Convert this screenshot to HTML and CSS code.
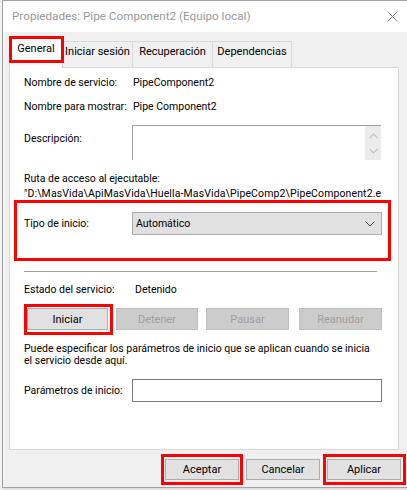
FILE: index.html
```html
<!DOCTYPE html>
<html lang="es">
<head>
<meta charset="utf-8">
<link rel="stylesheet" href="styles.css">
</head>
<body>
<div class="window">
  <div class="titlebar">
    <span class="title">Propiedades: Pipe Component2 (Equipo local)</span>
    <svg class="close" width="11" height="11" viewBox="0 0 11 11"><path d="M0.5 0.5 L10.5 10.5 M10.5 0.5 L0.5 10.5" stroke="#8a8a8a" stroke-width="1" fill="none"/></svg>
  </div>
  <div class="client">
    <div class="tabs">
      <div class="tab sel">General<span class="hl hl-tab"></span></div>
      <div class="tab t2">Iniciar sesión</div>
      <div class="tab t3">Recuperación</div>
      <div class="tab t4">Dependencias</div>
    </div>
    <div class="panel">
      <div class="row r1"><span class="lbl">Nombre de servicio:</span><span class="val">PipeComponent2</span></div>
      <div class="row r2"><span class="lbl">Nombre para mostrar:</span><span class="val">Pipe Component2</span></div>
      <div class="row desc">
        <span class="lbl lbl-desc">Descripción:</span>
        <div class="descbox">
          <div class="scroll">
            <svg width="9" height="6" viewBox="0 0 9 6"><path d="M0.5 5 L4.5 1 L8.5 5" stroke="#c3c3c3" stroke-width="1.2" fill="none"/></svg>
            <svg width="9" height="6" viewBox="0 0 9 6"><path d="M0.5 1 L4.5 5 L8.5 1" stroke="#c3c3c3" stroke-width="1.2" fill="none"/></svg>
          </div>
        </div>
      </div>
      <div class="line ruta">Ruta de acceso al ejecutable:</div>
      <div class="line path">"D:\MasVida\ApiMasVida\Huella-MasVida\PipeComp2\PipeComponent2.exe"</div>
      <div class="row tipo">
        <span class="lbl">Tipo de inicio:</span>
        <div class="select">
          <span>Automático</span>
          <svg width="10" height="6" viewBox="0 0 10 6"><path d="M0.5 0.5 L5 5 L9.5 0.5" stroke="#4a4a4a" stroke-width="1" fill="none"/></svg>
        </div>
        <span class="hl hl-tipo"></span>
      </div>
      <div class="sep"></div>
      <div class="row estado"><span class="lbl">Estado del servicio:</span><span class="val val-estado">Detenido</span></div>
      <div class="btnrow">
        <div class="btn b-ini">Iniciar<span class="hl hl-ini"></span></div>
        <div class="btn dis b-det">Detener</div>
        <div class="btn dis b-pau">Pausar</div>
        <div class="btn dis b-rea">Reanudar</div>
      </div>
      <p class="note">Puede especificar los parámetros de inicio que se aplican cuando se inicia<br>el servicio desde aquí.</p>
      <div class="row params">
        <span class="lbl">Parámetros de inicio:</span>
        <div class="input"></div>
      </div>
    </div>
    <div class="footer">
      <div class="btn fbtn">Aceptar<span class="hl hl-foot"></span></div>
      <div class="btn fbtn">Cancelar</div>
      <div class="btn fbtn">Aplicar<span class="hl hl-foot2"></span></div>
    </div>
  </div>
</div>
</body>
</html>
```
FILE: styles.css
```css
html, body {
  margin: 0;
  padding: 0;
  overflow: hidden;
  background: #f3f3f3;
}
body {
  width: 407px;
  height: 490px;
  font-family: Roboto, "Liberation Sans", Arial, sans-serif;
  font-size: 10.5px;
  line-height: 13px;
  color: #000;
}
.window {
  margin-left: 2px;
  width: 420px;
  border-top: 1px solid #a3a3a3;
  border-left: 1px solid #a3a3a3;
  border-bottom: 1px solid #a3a3a3;
  box-shadow: 1px 1px 2px rgba(0,0,0,0.15);
}
.titlebar {
  height: 31px;
  background: #fff;
  display: flex;
  align-items: center;
  padding-left: 9px;
  position: relative;
}
.title {
  color: #999;
  font-size: 11.7px;
  margin-top: -1px;
}
.close {
  position: absolute;
  left: 384px;
  top: 10px;
}
.client {
  height: 455px;
  box-sizing: border-box;
  background: #f0f0f0;
  padding: 4px 0 0 6px;
}
.tabs {
  display: flex;
  align-items: flex-end;
  height: 32px;
  margin-bottom: -1px;
  position: relative;
  z-index: 1;
}
.tab {
  box-sizing: border-box;
  height: 26px;
  margin-bottom: 1px;
  padding-top: 3px;
  text-align: center;
  border-top: 1px solid #d9d9d9;
  border-right: 1px solid #d9d9d9;
  background: #f0f0f0;
  white-space: nowrap;
  font-size: 11px;
}
.tab.sel {
  position: relative;
  width: 54px;
  height: 32px;
  margin-bottom: 0;
  padding-top: 5px;
  background: #fff;
  border-left: 1px solid #d9d9d9;
}
.t2 { width: 70px; }
.t3 { width: 80px; }
.t4 { width: 79px; }
.hl {
  position: absolute;
  border: 3px solid #f00;
  box-sizing: border-box;
  pointer-events: none;
}
.hl-tab { left: -1px; top: -1px; width: 55px; height: 27px; }
.panel {
  box-sizing: border-box;
  width: 390px;
  height: 383px;
  background: #fff;
  border: 1px solid #d9d9d9;
  padding: 8px 0 0 14px;
}
.row {
  display: flex;
  align-items: center;
}
.lbl {
  width: 108px;
  flex: none;
  white-space: nowrap;
}
.val { padding-left: 1px; white-space: nowrap; }
.r2 { margin-top: 11px; }
.desc {
  margin-top: 12px;
  align-items: flex-start;
  height: 35px;
}
.lbl-desc { padding-top: 7px; }
.descbox {
  box-sizing: border-box;
  width: 249px;
  height: 35px;
  border-top: 1px solid #a0a0a0;
  border-left: 1px solid #a0a0a0;
  display: flex;
  justify-content: flex-end;
}
.scroll {
  width: 16px;
  height: 34px;
  background: #ececec;
  display: flex;
  flex-direction: column;
  align-items: center;
  justify-content: space-between;
  padding: 7px 0 6px;
  box-sizing: border-box;
}
.scroll svg { display: block; }
.line { white-space: nowrap; }
.ruta { margin-top: 12px; }
.path {
  margin-top: 2px;
  width: 357px;
  overflow: hidden;
  letter-spacing: 0.12px;
}
.tipo {
  position: relative;
  height: 61px;
  box-sizing: border-box;
  padding-top: 12px;
  align-items: flex-start;
}
.tipo .lbl { padding-top: 5px; }
.select {
  box-sizing: border-box;
  width: 250px;
  height: 23px;
  background: #e1e1e1;
  border: 1px solid #adadad;
  display: flex;
  align-items: center;
  justify-content: space-between;
  padding: 0 6px 0 3px;
}
.hl-tipo { left: -10px; top: 0; width: 377px; height: 61px; }
.sep {
  margin-top: 10px;
  width: 353px;
  height: 1px;
  background: #a0a0a0;
}
.estado { margin-top: 11px; }
.val-estado { padding-left: 3px; }
.btnrow {
  display: flex;
  margin-top: 12px;
  margin-left: 3px;
}
.btn {
  position: relative;
  box-sizing: border-box;
  height: 22px;
  background: #e1e1e1;
  border: 1px solid #adadad;
  display: flex;
  align-items: center;
  justify-content: center;
  white-space: nowrap;
  font-size: 11px;
}
.btn.dis {
  background: #cccccc;
  border-color: #bfbfbf;
  color: #a0a0a0;
}
.b-ini { width: 81px; }
.b-det { width: 82px; margin-left: 8px; }
.b-pau { width: 83px; margin-left: 8px; }
.b-rea { width: 83px; margin-left: 10px; }
.hl-ini { left: -4px; top: -5px; width: 89px; height: 31px; }
.note {
  margin: 13px 0 0;
  line-height: 12px;
  white-space: nowrap;
}
.params {
  margin-top: 12px;
}
.input {
  box-sizing: border-box;
  width: 250px;
  height: 23px;
  border: 1px solid #7a7a7a;
  background: #fff;
}
.footer {
  display: flex;
  margin: 9px 0 0 156px;
}
.fbtn {
  width: 74px;
  height: 21px;
  margin-right: 7px;
}
.hl-foot { left: -5px; top: -6px; width: 82px; height: 31px; }
.hl-foot2 { left: -5px; top: -6px; width: 83px; height: 31px; }
```
